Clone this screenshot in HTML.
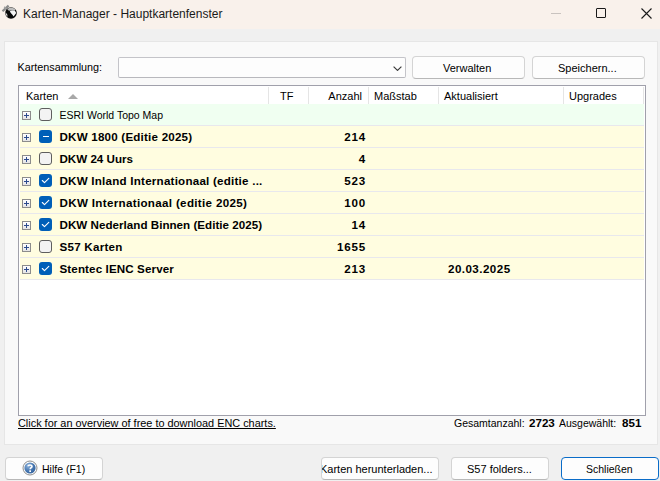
<!DOCTYPE html>
<html><head><meta charset="utf-8">
<style>
*{margin:0;padding:0;box-sizing:border-box}
html,body{width:660px;height:481px;overflow:hidden;background:#f0f0f0;font-family:"Liberation Sans",sans-serif;color:#000}
.a{position:absolute}
.t{position:absolute;white-space:nowrap;line-height:1}
#title{left:0;top:0;width:660px;height:29px;background:#f9f1eb}
#panel{left:4px;top:41px;width:654px;height:404px;background:#f9f9f9;border:1px solid #e6e6e6}
.combo{left:118px;top:57px;width:288px;height:21px;background:#fdfdfd;border:1px solid #c4c4c9;border-bottom-color:#b8b8bd;border-radius:2px}
.btn{background:#fdfdfd;border:1px solid #d4d4d4;border-bottom-color:#b8b8b8;border-radius:4px}
#list{left:18px;top:85px;width:628px;height:331px;background:#fff;border:1px solid #a0a0ab}
.sep{position:absolute;top:87px;width:1px;height:17px;background:#e5e5e5}
.row{position:absolute;left:20px;width:624px;height:21px}
.rsep{position:absolute;left:20px;width:624px;height:1px;background:#e8e8ed}
.exp{position:absolute;left:22px;width:9px;height:9px;border:1px solid #8c8c8c;background:linear-gradient(#fff,#e4e4e4)}
.ph{position:absolute;left:1px;top:3px;width:5px;height:1px;background:#2d4b8c}
.pv{position:absolute;left:3px;top:1px;width:1px;height:5px;background:#2d4b8c}
.cb{position:absolute;left:39px;width:13px;height:13px;border-radius:3px}
.cb0{border:1px solid #5e5e5e;background:#f3f3f3}
.cb1{background:#005fb8}
.cb svg{position:absolute;left:0;top:0}
.rt{position:absolute;left:59.5px;font-size:11.6px;font-weight:bold;line-height:1;white-space:nowrap}
.rtn{position:absolute;left:59.5px;font-size:10.5px;line-height:1;white-space:nowrap}
.num{position:absolute;font-size:11.6px;font-weight:bold;line-height:1;white-space:nowrap;text-align:right;width:60px;left:306px;letter-spacing:0.8px}
.hd{position:absolute;top:91px;font-size:11px;line-height:1;white-space:nowrap;color:#000}
</style></head><body>
<div id="title" class="a">
  <svg class="a" style="left:0px;top:2px" width="22" height="22" viewBox="0 0 22 22">
    <path d="M2.5 9.2 L8.6 3.6" stroke="#8a8a8a" stroke-width="2.2"/>
    <path d="M4.2 4.8 L7.2 8.2" stroke="#a0a0a0" stroke-width="1.4"/>
    <circle cx="11" cy="11" r="5.8" fill="#080808"/>
    <path d="M7.2 7.2 Q11 3.8 15.6 7.6 L14.5 8.6 L12.5 8 L10 8.8 L8.5 8.4 Z" fill="#bdbdbd"/>
    <path d="M9.8 9.3 L12 8.3 L14.8 8.6 L16.2 11 L13.6 14.6 L12.4 12.8 L10.8 11 Z" fill="#f5f5f5"/>
    <path d="M5.4 10.2 Q5.3 13 7.6 14.8 L7.2 12.3 Z" fill="#d8d8d8"/>
  </svg>
  <div class="t" style="left:23px;top:8px;font-size:12px;color:#1a1a1a">Karten-Manager - Hauptkartenfenster</div>
  <div class="a" style="left:551px;top:13px;width:10px;height:1px;background:#c9c3bf"></div>
  <div class="a" style="left:596px;top:8px;width:10px;height:10px;border:1px solid #1a1a1a;border-radius:1px"></div>
  <svg class="a" style="left:641px;top:8px" width="11" height="11" viewBox="0 0 11 11"><path d="M0.5 0.5 L10.5 10.5 M10.5 0.5 L0.5 10.5" stroke="#1a1a1a" stroke-width="1.1"/></svg>
</div>

<div id="panel" class="a"></div>
<div class="t" style="left:17.5px;top:62px;font-size:10.8px">Kartensammlung:</div>
<div class="a combo">
  <svg class="a" style="left:274px;top:8px" width="9" height="5" viewBox="0 0 9 5"><path d="M0.6 0.6 L4.5 4.4 L8.4 0.6" fill="none" stroke="#3a3a3a" stroke-width="1.15"/></svg>
</div>
<div class="a btn" style="left:412px;top:56px;width:113px;height:23px"></div>
<div class="t" style="left:443px;top:63px;font-size:11px">Verwalten</div>
<div class="a btn" style="left:532px;top:56px;width:113px;height:23px"></div>
<div class="t" style="left:558px;top:63px;font-size:11px">Speichern...</div>

<div id="list" class="a"></div>
<div class="hd" style="left:26px">Karten</div>
<svg class="a" style="left:68px;top:94px" width="10" height="5" viewBox="0 0 10 5"><path d="M0 5 L5 0 L10 5 Z" fill="#a8a8a8"/></svg>
<div class="sep" style="left:268px"></div>
<div class="hd" style="left:280px">TF</div>
<div class="sep" style="left:308px"></div>
<div class="hd" style="left:320px;width:42px;text-align:right">Anzahl</div>
<div class="sep" style="left:368px"></div>
<div class="hd" style="left:374px">Maßstab</div>
<div class="sep" style="left:438px"></div>
<div class="hd" style="left:444px">Aktualisiert</div>
<div class="sep" style="left:563px"></div>
<div class="hd" style="left:569px">Upgrades</div>
<div class="sep" style="left:643px"></div>

<div class="row" style="top:104px;background:#f0fff1"></div>
<div class="rsep" style="top:125px"></div>
<div class="exp" style="top:111px"><div class="ph"></div><div class="pv"></div></div>
<div class="cb cb0" style="top:108px"></div>
<div class="rtn" style="top:110px;letter-spacing:0px">ESRI World Topo Map</div>
<div class="row" style="top:126px;background:#fffde0"></div>
<div class="rsep" style="top:147px"></div>
<div class="exp" style="top:133px"><div class="ph"></div><div class="pv"></div></div>
<div class="cb cb1" style="top:130px"><div style="position:absolute;left:4px;top:6px;width:5.5px;height:1px;background:#fff"></div></div>
<div class="rt" style="top:131px;letter-spacing:0.21px">DKW 1800 (Editie 2025)</div>
<div class="num" style="top:131px">214</div>
<div class="row" style="top:148px;background:#fffde0"></div>
<div class="rsep" style="top:169px"></div>
<div class="exp" style="top:155px"><div class="ph"></div><div class="pv"></div></div>
<div class="cb cb0" style="top:152px"></div>
<div class="rt" style="top:153px;letter-spacing:0px">DKW 24 Uurs</div>
<div class="num" style="top:153px">4</div>
<div class="row" style="top:170px;background:#fffde0"></div>
<div class="rsep" style="top:191px"></div>
<div class="exp" style="top:177px"><div class="ph"></div><div class="pv"></div></div>
<div class="cb cb1" style="top:174px"><svg width="13" height="13" viewBox="0 0 13 13"><path d="M3.3 6.5 L5.5 8.6 L9.8 4.3" fill="none" stroke="#fff" stroke-width="1.1" stroke-linecap="round" stroke-linejoin="round"/></svg></div>
<div class="rt" style="top:175px;letter-spacing:0.23px">DKW Inland Internationaal (editie ...</div>
<div class="num" style="top:175px">523</div>
<div class="row" style="top:192px;background:#fffde0"></div>
<div class="rsep" style="top:213px"></div>
<div class="exp" style="top:199px"><div class="ph"></div><div class="pv"></div></div>
<div class="cb cb1" style="top:196px"><svg width="13" height="13" viewBox="0 0 13 13"><path d="M3.3 6.5 L5.5 8.6 L9.8 4.3" fill="none" stroke="#fff" stroke-width="1.1" stroke-linecap="round" stroke-linejoin="round"/></svg></div>
<div class="rt" style="top:197px;letter-spacing:0.33px">DKW Internationaal (editie 2025)</div>
<div class="num" style="top:197px">100</div>
<div class="row" style="top:214px;background:#fffde0"></div>
<div class="rsep" style="top:235px"></div>
<div class="exp" style="top:221px"><div class="ph"></div><div class="pv"></div></div>
<div class="cb cb1" style="top:218px"><svg width="13" height="13" viewBox="0 0 13 13"><path d="M3.3 6.5 L5.5 8.6 L9.8 4.3" fill="none" stroke="#fff" stroke-width="1.1" stroke-linecap="round" stroke-linejoin="round"/></svg></div>
<div class="rt" style="top:219px;letter-spacing:0.03px">DKW Nederland Binnen (Editie 2025)</div>
<div class="num" style="top:219px">14</div>
<div class="row" style="top:236px;background:#fffde0"></div>
<div class="rsep" style="top:257px"></div>
<div class="exp" style="top:243px"><div class="ph"></div><div class="pv"></div></div>
<div class="cb cb0" style="top:240px"></div>
<div class="rt" style="top:241px;letter-spacing:0.25px">S57 Karten</div>
<div class="num" style="top:241px">1655</div>
<div class="row" style="top:258px;background:#fffde0"></div>
<div class="rsep" style="top:279px"></div>
<div class="exp" style="top:265px"><div class="ph"></div><div class="pv"></div></div>
<div class="cb cb1" style="top:262px"><svg width="13" height="13" viewBox="0 0 13 13"><path d="M3.3 6.5 L5.5 8.6 L9.8 4.3" fill="none" stroke="#fff" stroke-width="1.1" stroke-linecap="round" stroke-linejoin="round"/></svg></div>
<div class="rt" style="top:263px;letter-spacing:0.12px">Stentec IENC Server</div>
<div class="num" style="top:263px">213</div>
<div class="rt" style="left:448px;top:263px;letter-spacing:0.45px">20.03.2025</div>

<div class="t" style="left:18px;top:418px;font-size:10.9px;text-decoration:underline">Click for an overview of free to download ENC charts.</div>
<div class="t" style="left:454px;top:418px;font-size:10.5px">Gesamtanzahl:</div>
<div class="t" style="left:529px;top:417px;font-size:11.6px;font-weight:bold">2723</div>
<div class="t" style="left:559px;top:418px;font-size:10.5px">Ausgewählt:</div>
<div class="t" style="left:622px;top:417px;font-size:11.6px;font-weight:bold">851</div>

<div class="a btn" style="left:5px;top:457px;width:98px;height:23px"></div>
<svg class="a" style="left:22px;top:460px" width="16" height="16" viewBox="0 0 16 16">
<defs><radialGradient id="hg" cx="0.35" cy="0.3" r="0.85"><stop offset="0" stop-color="#8fb4dc"/><stop offset="0.55" stop-color="#4676b0"/><stop offset="1" stop-color="#2e5d96"/></radialGradient></defs>
<circle cx="8" cy="8" r="7" fill="#fff" stroke="#8e8e8e" stroke-width="1"/>
<circle cx="8" cy="8" r="5.6" fill="url(#hg)"/>
<path d="M6.1 6.3 C6.1 4.6 10 4.5 10 6.4 C10 7.7 8.2 7.8 8.2 9.3" fill="none" stroke="#fff" stroke-width="1.6"/>
<rect x="7.3" y="10.3" width="1.7" height="1.7" fill="#fff"/>
</svg>
<div class="t" style="left:42px;top:464px;font-size:10.5px">Hilfe (F1)</div>
<div class="a btn" style="left:321px;top:457px;width:118px;height:23px;overflow:hidden"><div class="t" style="left:-2px;top:6px;font-size:11px">Karten herunterladen...</div></div>
<div class="a btn" style="left:451px;top:457px;width:98px;height:23px"></div>
<div class="t" style="left:467px;top:464px;font-size:11px">S57 folders...</div>
<div class="a btn" style="left:561px;top:457px;width:98px;height:23px;border:1px solid #0a6cc8"></div>
<div class="t" style="left:586px;top:464px;font-size:10.5px">Schließen</div>
</body></html>
